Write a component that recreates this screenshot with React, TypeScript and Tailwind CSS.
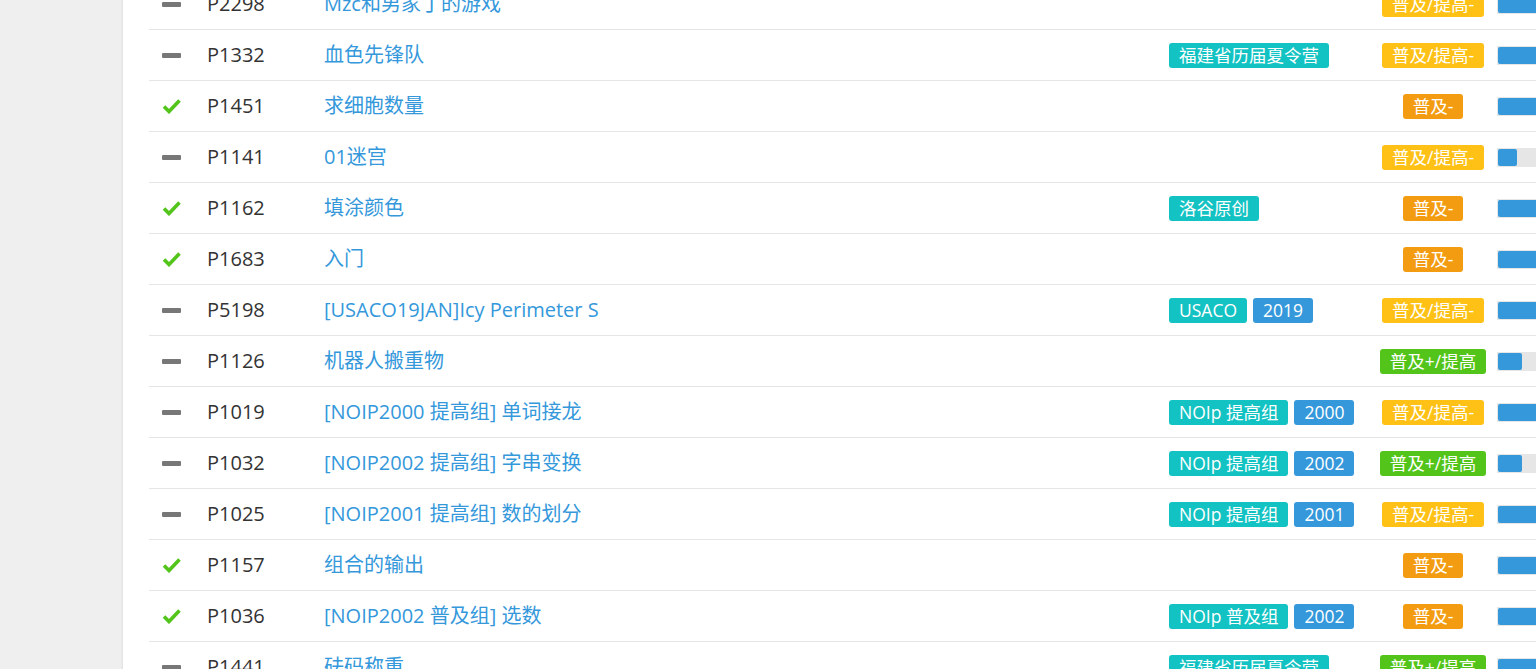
import React from "react";

type Problem = {
  ac: boolean;
  pid: string;
  title: string;
  tags: { text: string; kind: "src" | "year" }[];
  diff: 0 | 1 | 2;
  rate: number;
};

const diffs = [
  { text: "普及-", cls: "bg-[#f39c11]" },
  { text: "普及/提高-", cls: "bg-[#ffc116]" },
  { text: "普及+/提高", cls: "bg-[#52c41a]" },
];

const problems: Problem[] = [
  { ac: false, pid: "P2298", title: "Mzc和男家丁的游戏", tags: [], diff: 1, rate: 100 },
  { ac: false, pid: "P1332", title: "血色先锋队", tags: [{ text: "福建省历届夏令营", kind: "src" }], diff: 1, rate: 100 },
  { ac: true, pid: "P1451", title: "求细胞数量", tags: [], diff: 0, rate: 100 },
  { ac: false, pid: "P1141", title: "01迷宫", tags: [], diff: 1, rate: 19 },
  { ac: true, pid: "P1162", title: "填涂颜色", tags: [{ text: "洛谷原创", kind: "src" }], diff: 0, rate: 100 },
  { ac: true, pid: "P1683", title: "入门", tags: [], diff: 0, rate: 100 },
  {
    ac: false,
    pid: "P5198",
    title: "[USACO19JAN]Icy Perimeter S",
    tags: [
      { text: "USACO", kind: "src" },
      { text: "2019", kind: "year" },
    ],
    diff: 1,
    rate: 100,
  },
  { ac: false, pid: "P1126", title: "机器人搬重物", tags: [], diff: 2, rate: 24 },
  {
    ac: false,
    pid: "P1019",
    title: "[NOIP2000 提高组] 单词接龙",
    tags: [
      { text: "NOIp 提高组", kind: "src" },
      { text: "2000", kind: "year" },
    ],
    diff: 1,
    rate: 100,
  },
  {
    ac: false,
    pid: "P1032",
    title: "[NOIP2002 提高组] 字串变换",
    tags: [
      { text: "NOIp 提高组", kind: "src" },
      { text: "2002", kind: "year" },
    ],
    diff: 2,
    rate: 24,
  },
  {
    ac: false,
    pid: "P1025",
    title: "[NOIP2001 提高组] 数的划分",
    tags: [
      { text: "NOIp 提高组", kind: "src" },
      { text: "2001", kind: "year" },
    ],
    diff: 1,
    rate: 100,
  },
  { ac: true, pid: "P1157", title: "组合的输出", tags: [], diff: 0, rate: 100 },
  {
    ac: true,
    pid: "P1036",
    title: "[NOIP2002 普及组] 选数",
    tags: [
      { text: "NOIp 普及组", kind: "src" },
      { text: "2002", kind: "year" },
    ],
    diff: 0,
    rate: 100,
  },
  { ac: false, pid: "P1441", title: "砝码称重", tags: [{ text: "福建省历届夏令营", kind: "src" }], diff: 2, rate: 100 },
];

const StatusIcon = ({ ac }: { ac: boolean }) =>
  ac ? (
    <svg width="19" height="16" viewBox="0 0 19 16">
      <path d="M2 8.5 L7 13.5 L17.5 2.5" fill="none" stroke="#52c41a" strokeWidth="3.6" />
    </svg>
  ) : (
    <div className="h-[5px] w-[19px] rounded-[1px] bg-[#777]" />
  );

const Badge = ({ text, cls }: { text: string; cls: string }) => (
  <span className={`inline-block h-[25px] rounded-[3px] px-[10px] text-[17.5px] leading-[25px] text-white whitespace-nowrap ${cls}`}>
    {text}
  </span>
);

const Row = ({ p }: { p: Problem }) => {
  const d = diffs[p.diff];
  return (
    <div className="flex h-[51px] items-center border-b border-[#e5e5e5] pl-[13px]">
      <div className="w-[45px] flex items-center">
        <StatusIcon ac={p.ac} />
      </div>
      <div className="w-[117px] text-[#333]">{p.pid}</div>
      <div className="w-[845px] text-[#3498db] whitespace-nowrap">{p.title}</div>
      <div className="w-[204px] flex gap-[6px]">
        {p.tags.map((t) => (
          <Badge key={t.text} text={t.text} cls={t.kind === "src" ? "bg-[#13c2c2]" : "bg-[#3498db]"} />
        ))}
      </div>
      <div className="w-[120px] flex justify-center">
        <Badge text={d.text} cls={d.cls} />
      </div>
      <div className="ml-[4px] w-[100px] h-[19px] bg-[#e6e6e6] p-px">
        <div className="h-full rounded-[2px] bg-[#3498db]" style={{ width: `${p.rate}%` }} />
      </div>
    </div>
  );
};

export default function App() {
  return (
    <div
      className="h-[669px] w-full overflow-hidden bg-[#efefef]"
      style={{ fontFamily: '"Open Sans", "Noto Sans CJK SC", sans-serif' }}
    >
      <div className="ml-[123px] w-[1600px] min-h-[700px] bg-white pl-[26px] shadow-[0_0_3px_rgba(0,0,0,0.12)]">
        <div className="mt-[-21px] text-[20px]">
          {problems.map((p) => (
            <Row key={p.pid} p={p} />
          ))}
        </div>
      </div>
    </div>
  );
}
